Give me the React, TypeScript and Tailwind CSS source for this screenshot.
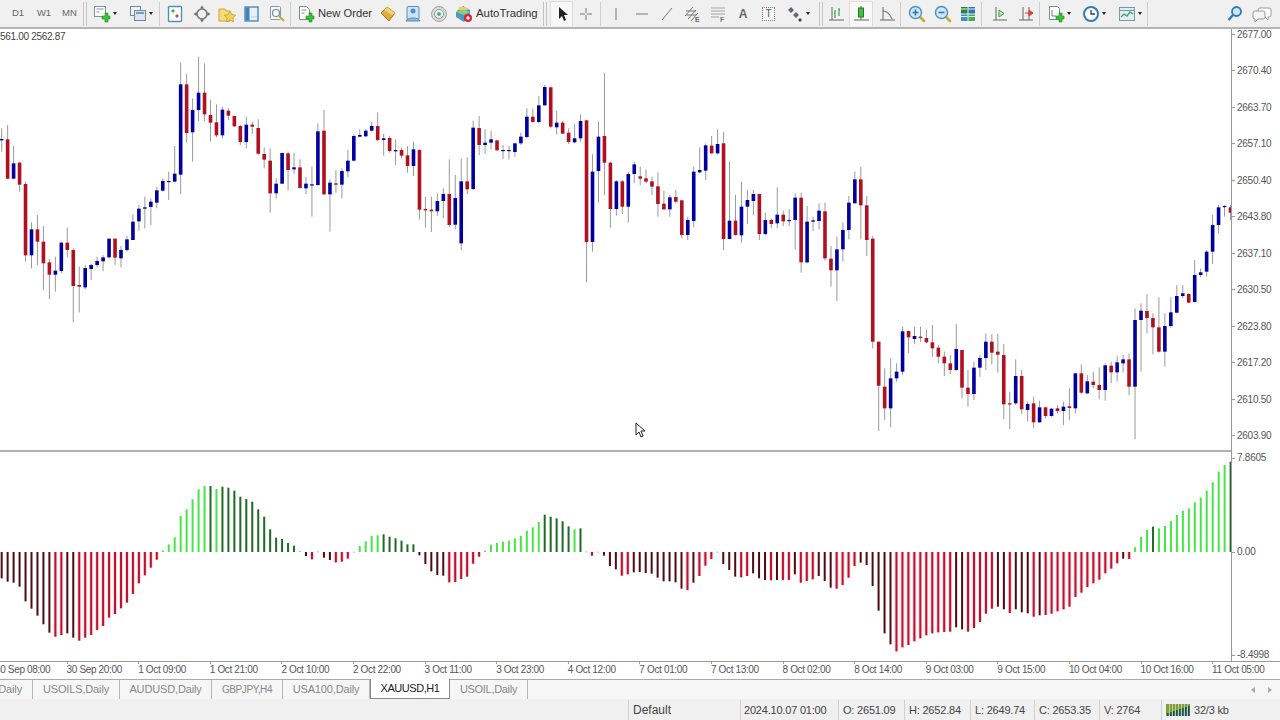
import type { ReactNode } from "react";

type Candle = [number, number, number, number, "r" | "b"];
type Bar = [number, "r" | "d" | "g" | "k" | "n"];

const STEP = 17.9;

// wick top, body top, body bottom, wick bottom, colour (measured on a 3x crop)
const candleSegments: { x0: number; y0: number; start: number; rows: Candle[] }[] = [
  {
    x0: 0, y0: 60, start: 5,
    rows: [
      [205,237,241,275,"b"],[195,238,356,358,"r"],[258,310,356,358,"b"],[306,308,374,395,"r"],[365,372,586,605,"r"],
      [487,508,586,625,"b"],[465,508,545,615,"r"],[498,545,610,690,"r"],[597,607,644,717,"r"],[590,632,644,695,"b"],
      [545,548,633,640,"b"],[503,548,570,592,"r"],[565,570,678,787,"r"],[620,675,680,757,"r"],[615,624,682,688,"b"],
      [612,615,627,660,"b"],[590,603,615,622,"b"],[585,592,604,633,"b"],[535,536,592,595,"b"],[535,536,593,615,"r"],
      [558,570,595,622,"b"],[528,538,570,575,"b"],[463,485,540,540,"b"],[435,446,484,512,"b"],[410,442,446,505,"b"],
      [415,425,441,495,"b"],[380,391,428,445,"b"],[355,363,392,395,"b"],[335,363,365,420,"b"],[258,341,365,365,"b"],
      [8,73,344,403,"b"],[42,73,219,248,"r"],[115,150,217,305,"b"],[-10,98,150,183,"b"],[10,98,163,183,"r"],
      [120,165,188,245,"r"],[133,187,226,232,"r"],[140,149,226,235,"b"],[145,152,167,180,"r"],[168,168,199,200,"r"],
      [195,198,246,255,"r"],[170,194,246,265,"b"],[185,194,200,222,"r"],[178,204,281,285,"r"],[262,282,299,325,"r"],
      [265,302,400,458,"r"],[355,371,400,415,"b"],[278,279,371,372,"b"],[275,280,330,392,"r"],[278,322,328,342,"b"],
      [298,322,384,385,"r"],[350,371,385,402,"b"],[320,373,375,470,"b"],[190,214,375,378,"b"],
    ],
  },
  {
    x0: 320, y0: 60, start: 12,
    rows: [
      [150,212,403,405,"r"],[358,368,403,515,"b"],[330,370,374,398,"r"],[325,333,374,415,"b"],[270,302,334,352,"b"],
      [222,228,302,305,"b"],[208,225,230,232,"b"],[208,212,229,232,"b"],[185,198,212,215,"b"],[157,198,240,245,"r"],
      [222,235,240,287,"b"],[228,234,273,278,"r"],[238,270,274,315,"b"],[262,270,287,295,"r"],[258,286,318,338,"r"],
      [245,268,318,348,"b"],[268,270,449,478,"r"],[410,447,451,503,"r"],[410,449,454,516,"r"],[400,423,454,468,"b"],
      [385,402,423,475,"b"],[298,402,495,500,"r"],[345,414,494,508,"b"],[295,364,550,570,"b"],[292,364,388,403,"r"],
      [182,203,387,390,"b"],[168,204,255,285,"r"],[208,248,255,282,"b"],[212,238,248,268,"b"],[240,241,271,272,"r"],
      [255,270,273,297,"b"],[258,270,273,298,"b"],[248,250,276,290,"b"],[218,230,250,255,"b"],[145,170,231,235,"b"],
      [145,170,186,188,"r"],[108,136,186,190,"b"],[75,81,136,137,"b"],[80,82,200,205,"r"],[152,188,202,224,"b"],
      [183,188,221,222,"r"],[205,218,246,252,"r"],[192,235,247,250,"b"],[163,183,235,245,"b"],[180,181,546,667,"r"],
      [283,335,546,575,"b"],[185,230,333,428,"b"],[38,228,308,405,"r"],[305,308,447,503,"r"],[360,364,447,467,"b"],
      [360,364,440,462,"r"],[335,342,440,488,"b"],[305,313,342,370,"b"],[320,349,356,375,"r"],
    ],
  },
  {
    x0: 640, y0: 120, start: 18,
    rows: [
      [148,175,185,190,"r"],[170,184,200,225,"r"],[157,199,252,290,"r"],[212,251,268,270,"r"],[225,232,268,290,"b"],
      [210,231,245,250,"r"],[240,241,345,355,"r"],[290,300,345,360,"b"],[140,155,303,322,"b"],[82,150,157,160,"b"],
      [70,76,152,180,"b"],[48,77,100,103,"r"],[28,72,100,103,"b"],[35,70,357,390,"r"],[125,302,357,357,"b"],
      [225,302,345,347,"r"],[185,260,346,368,"b"],[210,240,260,312,"b"],[210,222,243,285,"b"],[222,222,342,360,"r"],
      [278,300,342,345,"b"],[295,300,312,325,"r"],[202,284,310,325,"b"],[272,284,304,318,"r"],[268,300,303,318,"b"],
      [220,233,300,388,"b"],[218,233,427,458,"r"],[258,305,427,430,"b"],[290,301,305,333,"b"],[250,272,303,328,"b"],
      [248,274,415,422,"r"],[378,416,451,500,"r"],[350,388,451,543,"b"],[308,330,388,425,"b"],[228,248,330,358,"b"],
      [155,178,250,250,"b"],[140,178,256,358,"r"],[228,256,360,408,"r"],[348,356,665,685,"r"],[665,665,797,933,"r"],
      [745,800,865,900,"r"],[715,775,865,922,"b"],[730,755,775,785,"b"],[620,634,755,765,"b"],[632,633,652,700,"r"],
      [620,648,657,672,"b"],[620,650,654,665,"r"],[628,654,667,670,"r"],[615,667,685,710,"r"],[675,683,710,730,"r"],
      [695,710,730,768,"r"],[705,730,750,762,"r"],[612,687,750,752,"b"],
    ],
  },
  {
    x0: 960, y0: 190, start: 6,
    rows: [
      [480,480,593,625,"r"],[540,593,612,650,"r"],[515,533,612,630,"b"],[495,504,533,560,"b"],[430,455,504,540,"b"],
      [432,455,488,523,"r"],[432,485,494,548,"r"],[462,495,643,688,"r"],[605,640,642,717,"r"],[508,558,640,645,"b"],
      [540,558,658,672,"r"],[635,642,660,695,"b"],[620,640,697,715,"r"],[632,652,697,698,"b"],[650,652,678,685,"r"],
      [655,656,678,680,"b"],[645,655,663,670,"r"],[635,650,663,705,"b"],[595,649,654,690,"r"],[548,550,655,670,"b"],
      [523,550,608,612,"r"],[555,574,610,612,"b"],[545,575,585,595,"r"],[532,585,600,628,"r"],[520,526,600,632,"b"],
      [515,527,547,580,"r"],[498,517,547,575,"b"],[495,508,520,548,"b"],[490,508,590,615,"r"],[355,390,590,748,"b"],
      [340,362,390,545,"b"],[312,363,384,430,"r"],[370,384,412,493,"r"],[322,412,485,488,"r"],[370,408,485,530,"b"],
      [322,367,408,413,"b"],[285,318,368,370,"b"],[285,310,318,325,"b"],[310,312,338,338,"r"],[210,255,336,338,"b"],
      [235,247,255,262,"b"],[180,185,245,260,"b"],[75,105,185,222,"b"],[45,52,105,130,"b"],[45,48,50,80,"b"],
      [45,52,68,90,"r"],
    ],
  },
];

const barSegments: { x0: number; y0: number; start: number; rows: Bar[] }[] = [
  {
    x0: 0, y0: 450, start: 5,
    rows: [
      [385,"d"],[395,"d"],[398,"d"],[410,"d"],[454,"d"],[476,"d"],[497,"d"],[523,"d"],[548,"d"],[560,"r"],[555,"r"],[550,"d"],[563,"d"],
      [572,"r"],[563,"r"],[555,"r"],[540,"r"],[528,"r"],[503,"r"],[492,"r"],[475,"r"],[458,"r"],[432,"r"],[400,"r"],[376,"r"],[353,"r"],[329,"r"],
      [301,"g"],[283,"g"],[262,"g"],[198,"g"],[178,"g"],[148,"g"],[118,"g"],[108,"g"],[108,"k"],[117,"g"],[110,"k"],[113,"k"],[122,"k"],
      [140,"k"],[147,"k"],[155,"k"],[178,"k"],[200,"k"],[238,"k"],[263,"k"],[267,"k"],[279,"k"],[287,"k"],[303,"n"],[318,"d"],
    ],
  },
  {
    x0: 310, y0: 500, start: 6,
    rows: [
      [178,"r"],[154,"n"],[173,"d"],[180,"d"],[187,"r"],[185,"r"],[176,"r"],[155,"n"],
      [138,"g"],[124,"g"],[108,"g"],[106,"g"],[103,"k"],[110,"k"],[115,"k"],[122,"k"],[133,"k"],[133,"k"],
      [166,"d"],[192,"d"],[214,"d"],[225,"d"],[227,"d"],[247,"r"],[246,"r"],[237,"r"],[230,"r"],[191,"r"],[170,"r"],
      [152,"g"],[135,"g"],[129,"g"],[125,"g"],[122,"g"],[115,"g"],[108,"g"],[92,"g"],[82,"g"],[66,"g"],
      [44,"k"],[50,"k"],[55,"k"],[64,"k"],[79,"k"],[88,"g"],[85,"k"],[154,"n"],
    ],
  },
  {
    x0: 590, y0: 530, start: 6,
    rows: [
      [77,"r"],[65,"n"],[77,"d"],[108,"d"],[118,"d"],[137,"r"],[133,"r"],[127,"d"],[126,"d"],[129,"d"],[131,"d"],[143,"d"],[154,"d"],[154,"d"],
      [157,"d"],[176,"d"],[180,"r"],[158,"d"],[138,"r"],[107,"r"],[87,"r"],[65,"n"],[102,"d"],[120,"d"],[140,"d"],[142,"r"],[138,"r"],[130,"d"],
      [145,"d"],[150,"d"],[151,"r"],[150,"d"],[150,"r"],[150,"r"],[133,"d"],[158,"r"],[153,"r"],[148,"r"],[138,"d"],[153,"d"],[173,"d"],[176,"r"],
      [165,"r"],[143,"r"],[108,"r"],
    ],
  },
  {
    x0: 860, y0: 450, start: 2,
    rows: [
      [338,"d"],[345,"d"],[408,"d"],[482,"d"],[550,"d"],[583,"d"],[604,"r"],[592,"r"],[585,"r"],[574,"r"],[565,"r"],[556,"r"],[550,"r"],[547,"r"],
      [546,"r"],[545,"r"],[532,"d"],[538,"d"],[545,"r"],[534,"r"],[516,"r"],[491,"r"],[476,"r"],[470,"d"],[478,"d"],[489,"r"],[478,"d"],[487,"d"],
      [490,"d"],[500,"r"],[496,"d"],[495,"r"],[491,"r"],[484,"r"],[478,"r"],[470,"r"],[441,"r"],[428,"r"],[411,"r"],[400,"r"],[389,"r"],[370,"r"],
      [356,"r"],[340,"r"],[326,"d"],[327,"r"],[292,"g"],[260,"g"],[240,"g"],[230,"k"],[235,"g"],[228,"g"],[213,"g"],[195,"g"],[182,"g"],[175,"g"],
      [157,"g"],[143,"g"],[122,"g"],[97,"g"],[65,"g"],[45,"g"],[35,"k"],
    ],
  },
];

const barColor = { r: "#c20f2c", d: "#4f0a12", g: "#48e448", k: "#1d6a24", n: "#b9b9b9" };

const prices = ["2677.00","2670.40","2663.70","2657.10","2650.40","2643.80","2637.10","2630.50","2623.80","2617.20","2610.50","2603.90"];
const times = ["30 Sep 08:00","30 Sep 20:00","1 Oct 09:00","1 Oct 21:00","2 Oct 10:00","2 Oct 22:00","3 Oct 11:00","3 Oct 23:00","4 Oct 12:00","7 Oct 01:00","7 Oct 13:00","8 Oct 02:00","8 Oct 14:00","9 Oct 03:00","9 Oct 15:00","10 Oct 04:00","10 Oct 16:00","11 Oct 05:00"];
const tabs = [
  { name: "USOILS,Daily", w: "w-[87px]" },
  { name: "AUDUSD,Daily", w: "w-[92px]" },
  { name: "GBPJPY,H4", w: "w-[71px] text-[10px] tracking-[-0.4px]" },
  { name: "USA100,Daily", w: "w-[87px]" },
];

function CandleChart() {
  return (
    <svg width="1231" height="421" viewBox="0 29 1231 421" className="block">
      {candleSegments.map((seg) =>
        seg.rows.map(([wt, bt, bb, wb, c], i) => {
          const x = seg.x0 + (seg.start + STEP * i) / 3;
          const y = (v: number) => seg.y0 + v / 3;
          return (
            <g key={seg.x0 + "-" + i}>
              <rect x={x - 0.5} y={y(wt)} width="1" height={(wb - wt) / 3} fill="#9a9a9a" />
              <rect x={x - 1.8} y={y(bt)} width="3.6" height={Math.max((bb - bt) / 3, 1.2)} fill={c === "r" ? "#b0101f" : "#00009e"} />
            </g>
          );
        })
      )}
    </svg>
  );
}

function Histogram() {
  return (
    <svg width="1231" height="209" viewBox="0 452 1231 209" className="block">
      {barSegments.map((seg) =>
        seg.rows.map(([end, c], i) => {
          const x = seg.x0 + (seg.start + STEP * i) / 3;
          const y = seg.y0 + end / 3;
          const top = Math.min(y, 552);
          const h = Math.max(Math.abs(y - 552), 1);
          return (
            <g key={seg.x0 + "-" + i}>
              {c === "r" && <rect x={x - 1.9} y={top} width="3.8" height={h} fill="#f7b6c4" opacity="0.55" />}
              <rect x={x - 1} y={top} width="2" height={h} fill={barColor[c]} />
            </g>
          );
        })
      )}
    </svg>
  );
}

function Ico({ children, w = 18 }: { children: ReactNode; w?: number }) {
  return (
    <svg width={w} height="18" viewBox={"0 0 " + w + " 18"} className="block shrink-0">
      {children}
    </svg>
  );
}

function Drop() {
  return <span className="ml-[2px] h-0 w-0 border-x-[2.5px] border-t-[3px] border-x-transparent border-t-[#222]" />;
}

function Sep({ double }: { double?: boolean }) {
  return double ? (
    <div className="flex h-[24px] w-[4px] shrink-0 justify-between">
      <span className="w-px bg-[#c4c4c4]" />
      <span className="w-px bg-[#c4c4c4]" />
    </div>
  ) : (
    <span className="h-[24px] w-px shrink-0 bg-[#cdcdcd]" />
  );
}

function Btn({ w, active, children }: { w: string; active?: boolean; children: ReactNode }) {
  return (
    <div className={"flex h-[25px] shrink-0 items-center justify-center " + w + (active ? " border-x border-t border-[#dcdcdc] bg-[#f8f8f8]" : "")}>
      {children}
    </div>
  );
}

const Plus = () => (
  <path d="M10 9h3V6h3v3h2v3h-2v3h-3v-3h-3z" fill="#35c435" stroke="#1f8a1f" strokeWidth="0.6" transform="translate(-1 2)" />
);

const Magnifier = ({ sign }: { sign: "+" | "-" }) => (
  <Ico>
    <path d="M11 11l5 5" stroke="#c9a83a" strokeWidth="2.6" strokeLinecap="round" />
    <circle cx="7.5" cy="7.5" r="6" fill="#cfe6f7" stroke="#4f8fbf" strokeWidth="1.4" />
    <path d={sign === "+" ? "M4.5 7.5h6M7.5 4.5v6" : "M4.5 7.5h6"} stroke="#2d77b0" strokeWidth="1.6" />
  </Ico>
);

function Toolbar() {
  return (
    <div className="flex h-[27px] shrink-0 items-center bg-[#f0f0f0] pl-[5px] text-[#666]">
      {["D1", "W1"].map((t) => (
        <Btn key={t} w="w-[26px]"><span className="text-[9.5px]">{t}</span></Btn>
      ))}
      <Btn w="w-[25px]"><span className="text-[9.5px]">MN</span></Btn>
      <div className="mx-[1px]"><Sep double /></div>
      <Btn w="w-[34px]">
        <Ico>
          <rect x="1.5" y="1.5" width="11" height="10" fill="#fff" stroke="#7a93a8" />
          <path d="M3.5 4h7M3.5 7h3" stroke="#7a93a8" />
          <Plus />
        </Ico>
        <Drop />
      </Btn>
      <Btn w="w-[37px]">
        <Ico>
          <rect x="1.5" y="1.5" width="10" height="9" fill="#eef3f7" stroke="#6d8ba3" />
          <rect x="5.5" y="5.5" width="11" height="10" fill="#dbe6ef" stroke="#6d8ba3" />
          <path d="M7 8h8" stroke="#4f86b5" strokeWidth="1.5" />
        </Ico>
        <Drop />
      </Btn>
      <Sep />
      <Btn w="w-[29px]">
        <Ico>
          <rect x="2.5" y="1.5" width="13" height="15" rx="1" fill="#fff" stroke="#4f8fbf" strokeWidth="1.4" />
          <path d="M7 4l2 2-2 2-2-2z" fill="#42b54a" />
          <path d="M11 9l2 2-2 2-2-2z" fill="#d9492f" />
        </Ico>
      </Btn>
      <Btn w="w-[25px]">
        <Ico>
          <circle cx="9" cy="9" r="5" fill="none" stroke="#6f6f6f" strokeWidth="1.5" />
          <path d="M9 0.5l2 3H7zM9 17.5l2-3H7zM0.5 9l3-2v4zM17.5 9l-3-2v4z" fill="#6f6f6f" />
        </Ico>
      </Btn>
      <Btn w="w-[25px]">
        <Ico>
          <path d="M1 4h6l1 2h4v10H1z" fill="#f6dc7d" stroke="#c9a63c" />
          <path d="M12 6l1.8 3.6 4 .6-2.9 2.8.7 4-3.6-1.9-3.6 1.9.7-4L6.2 10.2l4-.6z" fill="#f5d24d" stroke="#b99a2e" strokeWidth="0.7" />
        </Ico>
      </Btn>
      <Btn w="w-[25px]">
        <Ico>
          <rect x="2" y="2" width="13" height="14" fill="#e6f0f8" stroke="#3f83b8" strokeWidth="1.3" />
          <rect x="2.5" y="2.5" width="4" height="13" fill="#3f83b8" />
          <path d="M8 12h6" stroke="#b9cfdf" />
        </Ico>
      </Btn>
      <Btn w="w-[26px]">
        <Ico>
          <rect x="2.5" y="1.5" width="10" height="13" rx="1" fill="#f4f4f4" stroke="#8a9aa6" />
          <circle cx="8" cy="8" r="3.5" fill="#fff" stroke="#6f8aa0" strokeWidth="1.2" />
          <path d="M11 11l5 5" stroke="#c9a83a" strokeWidth="2" />
        </Ico>
      </Btn>
      <Sep />
      <div className="flex h-[25px] w-[85px] shrink-0 items-center pl-[6px]">
        <Ico>
          <path d="M2.5 1.5h7l3 3v10h-10z" fill="#fff" stroke="#7a8a98" />
          <path d="M4.5 5h5M4.5 8h3" stroke="#7a93a8" />
          <Plus />
        </Ico>
        <span className="ml-[3px] whitespace-nowrap text-[11.2px] text-[#333]">New Order</span>
      </div>
      <Btn w="w-[24px]">
        <Ico>
          <path d="M2 8l6-6 8 6-6 8z" fill="#e0ad3f" stroke="#a77a1e" />
          <path d="M8 2l8 6-3 2-8-5z" fill="#f1d27a" />
        </Ico>
      </Btn>
      <Btn w="w-[26px]">
        <Ico>
          <rect x="3" y="1.5" width="12" height="13" rx="1" fill="#cfe3f4" stroke="#4f8fbf" />
          <circle cx="9" cy="6" r="2.5" fill="#4f8fbf" />
          <path d="M2 16c1-4 13-4 14 0z" fill="#8cb9dc" stroke="#4f8fbf" />
        </Ico>
      </Btn>
      <Btn w="w-[25px]">
        <Ico>
          <circle cx="9" cy="9" r="7.5" fill="#d9d9d9" stroke="#a3a3a3" />
          <circle cx="9" cy="9" r="4.5" fill="#eef5ee" stroke="#7fa4a0" />
          <circle cx="9" cy="9" r="2" fill="#58b074" />
        </Ico>
      </Btn>
      <div className="flex h-[25px] w-[92px] shrink-0 items-center pl-[4px]">
        <Ico>
          <path d="M1 7l7-6 7 4v5l-6 7-8-5z" fill="#4d97c9" />
          <path d="M1 7l7-3 7 3-6 3z" fill="#8ccf7a" />
          <path d="M4 2h7l2 3H3z" fill="#efcf63" />
          <circle cx="13" cy="13" r="4" fill="#d8262c" />
          <circle cx="13" cy="13" r="1.7" fill="#fff" />
        </Ico>
        <span className="ml-[3px] whitespace-nowrap text-[11.4px] text-[#333]">AutoTrading</span>
      </div>
      <div className="mr-[3px]"><Sep double /></div>
      <Btn w="w-[23px]" active>
        <Ico>
          <path d="M6 2v12l3-3 2 5 2-1-2-5h4z" fill="#222" />
        </Ico>
      </Btn>
      <Btn w="w-[25px]">
        <Ico><path d="M9 3v5M9 10v5M3 9h5M10 9h5" stroke="#777" /></Ico>
      </Btn>
      <Btn w="w-[5px]"><Sep /></Btn>
      <Btn w="w-[26px]">
        <Ico><path d="M9 3v12" stroke="#777" /></Ico>
      </Btn>
      <Btn w="w-[25px]">
        <Ico><path d="M3 9h12" stroke="#777" /></Ico>
      </Btn>
      <Btn w="w-[25px]">
        <Ico><path d="M4 15L14 3" stroke="#777" /></Ico>
      </Btn>
      <Btn w="w-[26px]">
        <Ico>
          <path d="M2 11l8-9M5 14l8-9M8 16l7-8M3 6l10 0M3 10l10 0" stroke="#777" />
          <text x="12" y="17" fontSize="7" fontWeight="700" fill="#666" fontFamily="Liberation Sans, sans-serif">E</text>
        </Ico>
      </Btn>
      <Btn w="w-[25px]">
        <Ico>
          <path d="M2 3h14M2 6h14M2 9h14M2 12h8" stroke="#a3a3a3" />
          <text x="11" y="17" fontSize="7" fontWeight="700" fill="#777" fontFamily="Liberation Sans, sans-serif">F</text>
        </Ico>
      </Btn>
      <Btn w="w-[26px]"><span className="text-[12px] font-bold text-[#666]">A</span></Btn>
      <Btn w="w-[25px]">
        <div className="flex h-[14px] w-[13px] items-center justify-center border border-dotted border-[#777] bg-[#f8f8f8] text-[10px] text-[#555]">T</div>
      </Btn>
      <Btn w="w-[34px]">
        <Ico>
          <path d="M5 2l3 3-3 3-3-3zM10 7l3 3-3 3-3-3z" fill="#5e6b75" />
          <path d="M14 13l2 2-2 2-2-2z" fill="#444" />
        </Ico>
        <Drop />
      </Btn>
      <div className="ml-[4px]"><Sep double /></div>
      <Btn w="w-[26px]">
        <Ico>
          <path d="M2 15h15M5 2v13" stroke="#666" />
          <path d="M8 5v8M12 3v8" stroke="#3aa53a" strokeWidth="1.2" />
          <path d="M7 8h1M12 5h1" stroke="#3aa53a" />
        </Ico>
      </Btn>
      <Btn w="w-[24px]" active>
        <Ico>
          <path d="M2 15h15M9 1v14" stroke="#666" />
          <rect x="6.5" y="3" width="5" height="9" fill="#3fbf3f" stroke="#237a23" />
        </Ico>
      </Btn>
      <Btn w="w-[27px]">
        <Ico>
          <path d="M2 15h15M5 2v13" stroke="#666" />
          <path d="M5 6c3 0 6 1 9 8" fill="none" stroke="#777" strokeWidth="1.2" />
        </Ico>
      </Btn>
      <Sep />
      <Btn w="ml-[3px] w-[26px]"><Magnifier sign="+" /></Btn>
      <Btn w="w-[25px]"><Magnifier sign="-" /></Btn>
      <Btn w="w-[26px]">
        <Ico>
          <rect x="2" y="2" width="6.5" height="6.5" fill="#2f7f3f" />
          <rect x="9.5" y="2" width="6.5" height="6.5" fill="#2b74b8" />
          <rect x="2" y="9.5" width="6.5" height="6.5" fill="#3f8fd0" />
          <rect x="9.5" y="9.5" width="6.5" height="6.5" fill="#4aa84f" />
          <path d="M2 4h6.5M9.5 4H16M2 11.5h6.5M9.5 11.5H16" stroke="#e8f0e8" />
        </Ico>
      </Btn>
      <Sep />
      <Btn w="ml-[4px] w-[27px]">
        <Ico>
          <path d="M2 15h14M5 2v13" stroke="#666" />
          <path d="M8 5l5 3.5L8 12z" fill="#bfe8bf" stroke="#3aa53a" />
        </Ico>
      </Btn>
      <Btn w="w-[26px]">
        <Ico>
          <path d="M2 15h14M6 2v13M12 2v13" stroke="#666" />
          <path d="M8 8h4M12 5l4 3-4 3z" fill="#e03a3a" stroke="#e03a3a" />
        </Ico>
      </Btn>
      <Sep />
      <Btn w="w-[37px]">
        <Ico>
          <path d="M2.5 1.5h8l2 2v11h-10z" fill="#fff" stroke="#7a8a98" />
          <path d="M5 5v6h4" fill="none" stroke="#777" />
          <Plus />
        </Ico>
        <Drop />
      </Btn>
      <Btn w="w-[33px]">
        <Ico>
          <circle cx="9" cy="9" r="7" fill="#fff" stroke="#2e7fb8" strokeWidth="2" />
          <path d="M9 5v4h4" fill="none" stroke="#2d3e4e" strokeWidth="1.3" />
        </Ico>
        <Drop />
      </Btn>
      <Btn w="ml-[3px] w-[34px]">
        <Ico>
          <rect x="1.5" y="2.5" width="15" height="13" fill="#e2ecf3" stroke="#7d97ab" />
          <path d="M1.5 5.5h15" stroke="#7d97ab" />
          <path d="M3 12l3-3 3 2 3-4 3 2" fill="none" stroke="#3fa65a" strokeWidth="1.3" />
        </Ico>
        <Drop />
      </Btn>
      <Sep />
      <div className="ml-auto flex items-center gap-[8px] pr-[8px]">
        <Ico>
          <circle cx="10.5" cy="6.5" r="4.5" fill="#cfe4f5" stroke="#2e7ab8" strokeWidth="1.8" />
          <path d="M7 10l-4.5 5" stroke="#2e7ab8" strokeWidth="2.4" />
        </Ico>
        <Ico w={20}>
          <path d="M8 3h9a2 2 0 0 1 2 2v5a2 2 0 0 1-2 2h-1v3l-3-3H8a2 2 0 0 1-2-2V5a2 2 0 0 1 2-2z" fill="#fff" stroke="#999" />
          <path d="M3 6h8a2 2 0 0 1 2 2v4a2 2 0 0 1-2 2H6l-3 3v-3a2 2 0 0 1-2-2V8a2 2 0 0 1 2-2z" fill="#f4f4f4" stroke="#999" />
        </Ico>
      </div>
    </div>
  );
}

function Tick() {
  return <span className="mr-[2px] h-px w-[3px] shrink-0 bg-[#9a9a9a]" />;
}

export default function App() {
  return (
    <div className="flex h-[720px] w-[1280px] flex-col overflow-hidden bg-white font-['Liberation_Sans',sans-serif]">
      <Toolbar />
      <div className="h-[2px] shrink-0 bg-[#b4b4b4]" />

      <div className="relative flex h-[632px] shrink-0">
        <div className="w-[1231px] shrink-0">
          <CandleChart />
          <div className="h-[2px] bg-[#b0b0b0]" />
          <Histogram />
        </div>

        <div className="flex-1 overflow-hidden border-l border-[#9a9a9a] text-[10px] tracking-[-0.25px] text-[#555]">
          <div className="-mt-[13px] flex h-[436px] flex-col">
            {prices.map((p) => (
              <div key={p} className="flex h-[36.5px] shrink-0 items-center">
                <Tick />
                {p}
              </div>
            ))}
          </div>
          <div className="flex h-[209px] flex-col leading-[12px]">
            <div className="flex items-center"><Tick />7.8605</div>
            <div className="mt-[82px] flex items-center"><Tick />0.00</div>
            <div className="mt-[91px] flex items-center"><Tick />-8.4998</div>
          </div>
        </div>

        <span className="absolute left-0 top-0 text-[10px] tracking-[-0.3px] text-[#444]">561.00 2562.87</span>
        <svg width="12" height="16" viewBox="0 0 12 16" className="absolute left-[635px] top-[393px]">
          <path d="M1 1v12l3-3 2 5 2-1-2-5h4z" fill="#fff" stroke="#222" strokeWidth="1" />
        </svg>
      </div>

      <div className="h-[18px] shrink-0 overflow-hidden border-t border-[#9a9a9a] text-[10px] leading-[11px] tracking-[-0.35px] text-[#555]">
        <div className="-ml-[5px] flex">
          {times.map((t) => (
            <div key={t} className="flex w-[71.6px] shrink-0 flex-col whitespace-nowrap">
              <span className="h-[2px] w-px bg-[#9a9a9a]" />
              {t}
            </div>
          ))}
        </div>
      </div>

      <div className="flex h-[20px] shrink-0 items-stretch border-t border-[#aaaaaa] bg-[#f6f6f6] text-[11px] tracking-[-0.15px] text-[#888]">
        <div className="flex w-[33px] items-center justify-end border-r border-[#b5b5b5] pr-[10px]">Daily</div>
        {tabs.map((t) => (
          <div key={t.name} className={"flex items-center justify-center border-r border-[#b5b5b5] " + t.w}>{t.name}</div>
        ))}
        <div className="-mt-px flex w-[80px] items-center justify-center border-x border-b border-[#8a8a8a] bg-white tracking-[-0.45px] text-[#222]">XAUUSD,H1</div>
        <div className="flex w-[78px] items-center justify-center border-r border-[#b5b5b5] tracking-[-0.3px]">USOIL,Daily</div>
        <div className="ml-auto flex items-center gap-[13px] pr-[8px]">
          <span className="h-0 w-0 border-y-[3px] border-r-[4px] border-y-transparent border-r-[#aaa]" />
          <span className="h-0 w-0 border-y-[3px] border-l-[4px] border-y-transparent border-l-[#aaa]" />
        </div>
      </div>

      <div className="flex min-h-0 flex-1 items-center bg-[#f0f0f0] pt-[1px] text-[11px] tracking-[-0.2px] text-[#444]">
        <div className="ml-[628px] flex h-full w-[112px] items-center border-l border-[#d0d0d0] pl-[4px] text-[12px] tracking-normal">Default</div>
        <div className="flex h-full w-[98px] items-center border-l border-[#d0d0d0] pl-[3px]">2024.10.07 01:00</div>
        <div className="flex h-full w-[66px] items-center border-l border-[#d0d0d0] pl-[4px]">O: 2651.09</div>
        <div className="flex h-full w-[66px] items-center border-l border-[#d0d0d0] pl-[4px]">H: 2652.84</div>
        <div className="flex h-full w-[64px] items-center border-l border-[#d0d0d0] pl-[4px]">L: 2649.74</div>
        <div className="flex h-full w-[65px] items-center border-l border-[#d0d0d0] pl-[4px]">C: 2653.35</div>
        <div className="flex h-full w-[62px] items-center border-l border-[#d0d0d0] pl-[4px]">V: 2764</div>
        <div className="flex h-full items-center gap-[4px] border-l border-[#d0d0d0] pl-[4px]">
          <svg width="24" height="12" viewBox="0 0 24 12" className="block">
            <rect width="24" height="12" fill="#7f9f3a" />
            {[1,4,7,10,13,16,19,22].map((x, i) => (
              <rect key={x} x={x} y={9 - i} width="1.6" height={3 + i} fill="#14506e" />
            ))}
            {[3,6,9,12,15,18,21].map((x) => (
              <rect key={x} x={x} y="0" width="0.6" height="12" fill="#e8efd8" />
            ))}
          </svg>
          32/3 kb
        </div>
      </div>
    </div>
  );
}
